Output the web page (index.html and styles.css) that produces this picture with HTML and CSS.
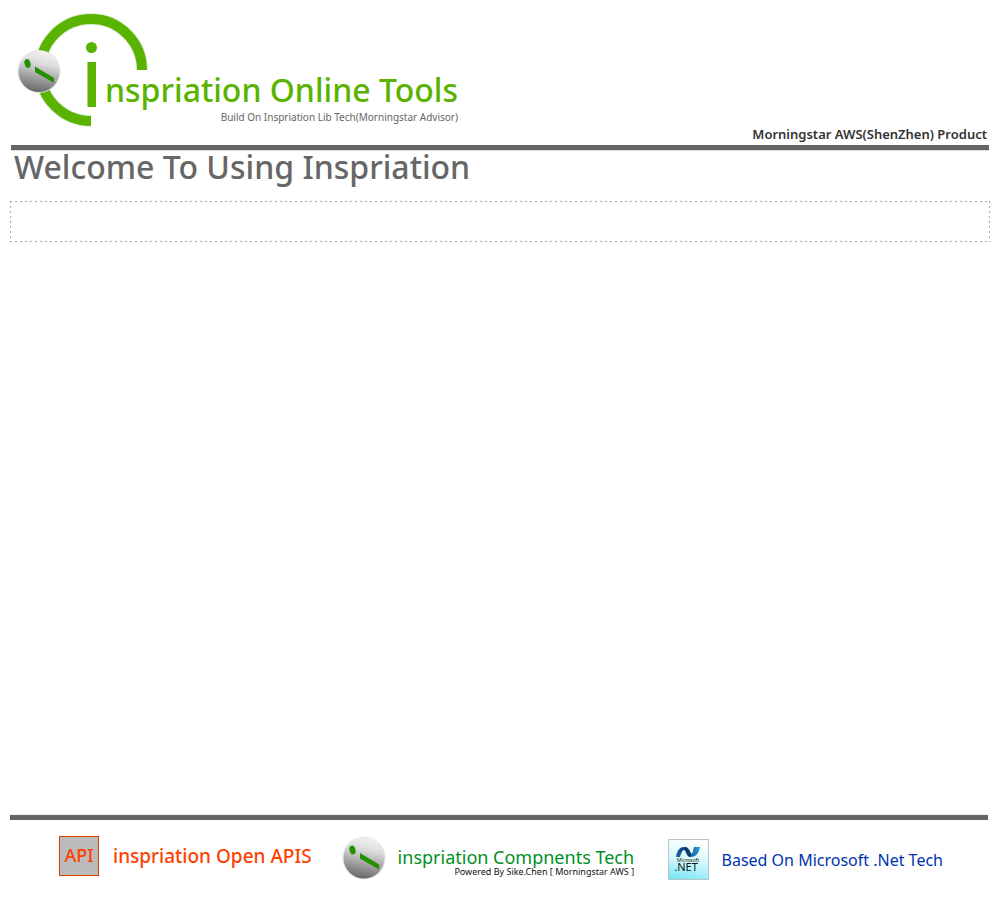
FILE: index.html
```html
<!DOCTYPE html>
<html lang="en">
<head>
<meta charset="utf-8">
<title>Inspriation Online Tools</title>
<link rel="stylesheet" href="styles.css">
</head>
<body>
<header class="header">
  <div class="brand">
    <svg class="logo" viewBox="0 0 140 120" role="img" aria-label="Inspriation logo">
      <defs>
        <linearGradient id="ball" x1="0.6" y1="0" x2="0.4" y2="1">
          <stop offset="0" stop-color="#f2f2f2"/>
          <stop offset="0.3" stop-color="#dcdcdc"/>
          <stop offset="1" stop-color="#666"/>
        </linearGradient>
      </defs>
      <path d="M132 60A51 51 0 0 0 30 60A51 51 0 0 0 81 111" fill="none" stroke="#e2eedb" stroke-width="12"/>
      <path d="M132 60A51 51 0 0 0 30 60A51 51 0 0 0 81 111" fill="none" stroke="#59b300" stroke-width="10"/>
      <circle cx="81.500" cy="37.500" r="5.500" fill="#59b300"/>
      <path d="M77.500 52h8.500v45h-8.500z" fill="#59b300"/>
      <circle cx="29" cy="61.500" r="21.500" fill="#e6e6e6"/>
      <circle cx="29" cy="61.500" r="20.500" fill="url(#ball)"/>
      <ellipse cx="17.500" cy="53.500" rx="3" ry="4.500" transform="rotate(-15 17.500 53.500)" fill="#229000"/>
      <path d="M25 56.500L44 68v5L25 62z" fill="#229000"/>
    </svg>
    <div class="brand-text">
      <h1 class="brand-name">nspriation Online Tools</h1>
      <p class="brand-tagline">Build On Inspriation Lib Tech(Morningstar Advisor)</p>
    </div>
  </div>
  <p class="product">Morningstar AWS(ShenZhen) Product</p>
</header>
<main class="main">
  <h2 class="welcome">Welcome To Using Inspriation</h2>
  <div class="panel"></div>
</main>
<footer class="footer">
  <div class="item item-api">
    <span class="api-badge">API</span>
    <span class="api-label">inspriation Open APIS</span>
  </div>
  <div class="item item-components">
    <svg class="ball" viewBox="0 0 44 44" aria-hidden="true">
      <circle cx="22" cy="22" r="21.500" fill="#e6e6e6"/>
      <circle cx="22" cy="22" r="20.500" fill="url(#ball)"/>
      <ellipse cx="10.500" cy="14" rx="3" ry="4.500" transform="rotate(-15 10.500 14)" fill="#229000"/>
      <path d="M18 17L37 28.500v5L18 22.500z" fill="#229000"/>
    </svg>
    <div class="components-text">
      <p class="components-label">inspriation Compnents Tech</p>
      <p class="components-note">Powered By Sike.Chen [ Morningstar AWS ]</p>
    </div>
  </div>
  <div class="item item-net">
    <svg class="net" viewBox="0 0 42 42" aria-label="Microsoft .NET" role="img">
      <defs>
        <linearGradient id="sky" x1="0.6" y1="0" x2="0.4" y2="1">
          <stop offset="0" stop-color="#fff"/>
          <stop offset="0.5" stop-color="#d8f8fd"/>
          <stop offset="1" stop-color="#7fe8f8"/>
        </linearGradient>
        <linearGradient id="wave" x1="0" y1="0" x2="1" y2="0">
          <stop offset="0" stop-color="#1769a8"/>
          <stop offset="0.4" stop-color="#083c73"/>
          <stop offset="0.7" stop-color="#1a6fb0"/>
          <stop offset="1" stop-color="#2b9fd8"/>
        </linearGradient>
      </defs>
      <path d="M.5.5h40v40h-40z" fill="url(#sky)" stroke="#b8c4c6"/>
      <path d="M8 18C9 11 12 8 16 8C21 8 21 15 23 15C25 15 25 11 26 8H32C31 14 28 18 23 18C18 18 18 11 16 11C14 11 13 15 12 18Z" fill="url(#wave)"/>
      <path d="M17 8C21 8 22 13 23.500 15L22 18C18 17 19 11 16 10Z" fill="#083c73"/>
      <text class="net-maker" x="20" y="23" text-anchor="middle">Microsoft</text>
      <text class="net-name" x="18" y="32" text-anchor="middle">.NET</text>
    </svg>
    <span class="net-label">Based On Microsoft .Net Tech</span>
  </div>
</footer>
</body>
</html>
```
FILE: styles.css
```css
* { box-sizing: border-box; }
body {
  display: flex;
  flex-direction: column;
  min-height: 100vh;
  margin: 0;
  padding: 10px;
  background: #fff;
  font-family: "Noto Sans", "Open Sans", sans-serif;
}
h1, h2, p { margin: 0; }
.header {
  display: flex;
  justify-content: space-between;
  align-items: flex-end;
  margin: 0 1px;
  border-bottom: 5px solid #666;
  box-shadow: 0 1px 0 #ddd;
}
.brand { display: flex; align-items: flex-start; padding-bottom: 15px; }
.logo { width: 140px; height: 120px; margin-right: -45px; margin-left: -1px; flex: none; }
.brand-text { padding-top: 60px; }
.brand-name { font-size: 32px; line-height: 40px; font-weight: 500; color: #59b300; }
.brand-tagline { font-size: 10px; line-height: 14px; color: #666; text-align: right; }
.product { padding: 0 2px 2px 0; font-size: 13px; line-height: 18px; font-weight: 600; color: #333; }
.main { flex: 1; }
.welcome { padding-left: 4px; font-size: 32px; line-height: 34px; font-weight: 500; color: #666; }
.panel {
  --dash: #aaa 0 2px, transparent 2px 5px;
  min-height: 41px;
  margin-top: 17px;
  background:
    repeating-linear-gradient(to right, var(--dash)) top / 100% 1px no-repeat,
    repeating-linear-gradient(to right, var(--dash)) bottom / 100% 1px no-repeat,
    repeating-linear-gradient(to bottom, var(--dash)) left / 1px 100% no-repeat,
    repeating-linear-gradient(to bottom, var(--dash)) right / 1px 100% no-repeat;
}
.footer {
  display: flex;
  align-items: flex-start;
  margin-right: 2px;
  padding: 16px 45px 9px 49px;
  border-top: 5px solid #666;
  box-shadow: 0 -1px 0 #eee;
}
.item { display: flex; align-items: center; }
.api-badge {
  width: 40px;
  height: 40px;
  border: 1px solid #e03a00;
  background: #bbb;
  color: #ff4000;
  font-size: 18px;
  line-height: 36px;
  font-weight: 500;
  text-align: center;
}
.api-label { margin-left: 14px; font-size: 19px; line-height: 40px; font-weight: 500; color: #ff4000; }
.item-components { margin-left: 30px; }
.ball { width: 44px; height: 44px; margin-right: 12px; }
.components-text { padding-top: 7px; }
.components-label { font-size: 18px; line-height: 20px; color: #009026; }
.components-note { font-size: 9px; line-height: 10px; color: #111; text-align: right; }
.item-net { margin: 3px 0 0 auto; }
.net { width: 42px; height: 42px; margin-right: 12px; }
.net-maker { font-size: 5px; fill: #222; }
.net-name { font-size: 11px; fill: #111; }
.net-label { font-size: 16px; line-height: 20px; color: #0033b0; }
```
